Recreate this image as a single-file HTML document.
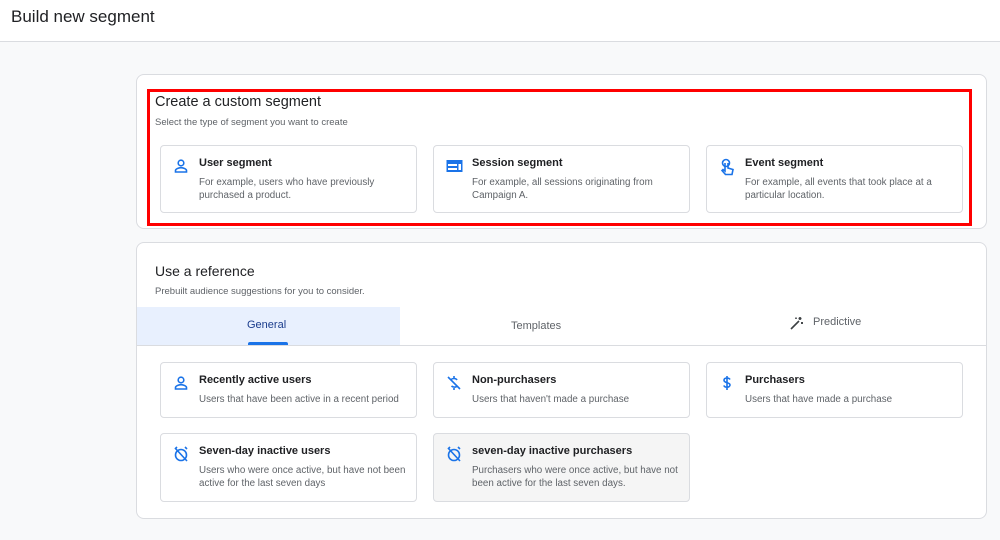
<!DOCTYPE html><html><head><style>
*{margin:0;padding:0;box-sizing:border-box}
body{width:1000px;height:540px;background:#f8f9fa;font-family:"Liberation Sans",Arial,sans-serif;position:relative;overflow:hidden;color:#202124}
.a{position:absolute}
.hdr{left:0;top:0;width:1000px;height:42px;background:#fff;border-bottom:1px solid #dadce0}
.hdr div{position:absolute;left:11px;top:7px;font-size:17px;color:#202124}
.card{background:#fff;border:1px solid #dadce0;border-radius:8px}
.it{background:#fff;border:1px solid #dadce0;border-radius:4px}
.it .t{position:absolute;left:38px;top:11px;font-size:11px;font-weight:bold;color:#202124}
.it .d{position:absolute;left:38px;top:31px;font-size:9.8px;line-height:12.5px;color:#5f6368;width:215px}
.it svg{position:absolute;left:12px;top:12px}
</style></head><body>
<div class="a hdr"><div>Build new segment</div></div>

<div class="a card" style="left:136px;top:74px;width:851px;height:155px"></div>
<div class="a" style="left:147px;top:89px;width:825px;height:137px;border:3px solid #f00"></div>
<div class="a" style="left:155px;top:94px;font-size:14.5px">Create a custom segment</div>
<div class="a" style="left:155px;top:117px;font-size:9.5px;color:#5f6368">Select the type of segment you want to create</div>

<div class="a it" style="left:160px;top:145px;width:257px;height:68px">
<svg width="16" height="16" viewBox="0 0 16 16" fill="none" stroke="#1a73e8" stroke-width="1.6"><circle cx="8" cy="5" r="2.8"/><path d="M2.5 14v-1.5c0-1.5 3-2.8 5.5-2.8s5.5 1.3 5.5 2.8V14z"/></svg>
<div class="t">User segment</div><div class="d">For example, users who have previously purchased a product.</div></div>
<div class="a it" style="left:433px;top:145px;width:257px;height:68px">
<svg width="17" height="16" viewBox="0 0 17 16"><rect x="0.5" y="2" width="16" height="12" fill="#1a73e8"/><rect x="2" y="6" width="9" height="2" fill="#fff"/><rect x="2" y="10" width="9" height="2" fill="#fff"/><rect x="12.5" y="6" width="2.5" height="6" fill="#fff"/></svg>
<div class="t">Session segment</div><div class="d">For example, all sessions originating from Campaign A.</div></div>
<div class="a it" style="left:706px;top:145px;width:257px;height:68px">
<svg width="16" height="18" viewBox="0 0 16 18" fill="none" stroke="#1a73e8" stroke-width="1.6"><circle cx="7" cy="5" r="3.5"/><path d="M6 5v8l-2-1.5-1 1 3.5 4H13l1-5-5-1.5V5"/></svg>
<div class="t">Event segment</div><div class="d">For example, all events that took place at a particular location.</div></div>

<div class="a card" style="left:136px;top:242px;width:851px;height:277px"></div>
<div class="a" style="left:155px;top:263px;font-size:14px">Use a reference</div>
<div class="a" style="left:155px;top:286px;font-size:9.5px;color:#5f6368">Prebuilt audience suggestions for you to consider.</div>
<div class="a" style="left:137px;top:307px;width:263px;height:38px;background:#e8f0fe"></div>
<div class="a" style="left:137px;top:345px;width:849px;height:1px;background:#dadce0"></div>
<div class="a" style="left:248px;top:342px;width:40px;height:3px;background:#1a73e8;border-radius:2px 2px 0 0"></div>
<div class="a" style="left:247px;top:319px;font-size:11px;color:#1a3c8c">General</div>
<div class="a" style="left:511px;top:320px;font-size:11px;color:#5f6368">Templates</div>
<svg class="a" style="left:789px;top:316px" width="15" height="15" viewBox="0 0 15 15" fill="none" stroke="#3c4043" stroke-width="1.6"><path d="M2 13l8-8"/><path d="M11 1v3M9.5 2.5h3M13 6v2M12 7h2M7 1.5v1.5"/></svg>
<div class="a" style="left:813px;top:316px;font-size:11px;color:#5f6368">Predictive</div>

<div class="a it" style="left:160px;top:362px;width:257px;height:56px">
<svg width="16" height="16" viewBox="0 0 16 16" fill="none" stroke="#1a73e8" stroke-width="1.6"><circle cx="8" cy="5" r="2.8"/><path d="M2.5 14v-1.5c0-1.5 3-2.8 5.5-2.8s5.5 1.3 5.5 2.8V14z"/></svg>
<div class="t">Recently active users</div><div class="d" style="top:31px">Users that have been active in a recent period</div></div>
<div class="a it" style="left:433px;top:362px;width:257px;height:56px">
<svg width="16" height="16" viewBox="0 0 16 16" fill="none" stroke="#1a73e8" stroke-width="1.6"><path d="M2 2l12 12M8 1v2M8 13v2M11 5c-.5-1-1.5-1.5-3-1.5-2 0-3 1-3 2M11 11c-1 1.5-4 1.5-5.5 0"/></svg>
<div class="t">Non-purchasers</div><div class="d" style="top:31px">Users that haven't made a purchase</div></div>
<div class="a it" style="left:706px;top:362px;width:257px;height:56px">
<svg width="16" height="16" viewBox="0 0 16 16" fill="none" stroke="#1a73e8" stroke-width="1.6"><path d="M8 1v14M11 4.5c-.5-1-1.5-1.5-3-1.5-2 0-3 1-3 2.3 0 3 6 1.7 6 4.7 0 1.3-1.3 2.2-3 2.2-1.6 0-2.7-.7-3.2-1.8"/></svg>
<div class="t">Purchasers</div><div class="d" style="top:31px">Users that have made a purchase</div></div>
<div class="a it" style="left:160px;top:433px;width:257px;height:69px">
<svg width="16" height="16" viewBox="0 0 16 16" fill="none" stroke="#1a73e8" stroke-width="1.6"><circle cx="8" cy="9" r="5.5"/><path d="M2 3l2-2M14 3l-2-2M2 2l12 13"/></svg>
<div class="t">Seven-day inactive users</div><div class="d">Users who were once active, but have not been active for the last seven days</div></div>
<div class="a it" style="left:433px;top:433px;width:257px;height:69px;background:#f5f5f5">
<svg width="16" height="16" viewBox="0 0 16 16" fill="none" stroke="#1a73e8" stroke-width="1.6"><circle cx="8" cy="9" r="5.5"/><path d="M2 3l2-2M14 3l-2-2M2 2l12 13"/></svg>
<div class="t">seven-day inactive purchasers</div><div class="d">Purchasers who were once active, but have not been active for the last seven days.</div></div>
</body></html>
